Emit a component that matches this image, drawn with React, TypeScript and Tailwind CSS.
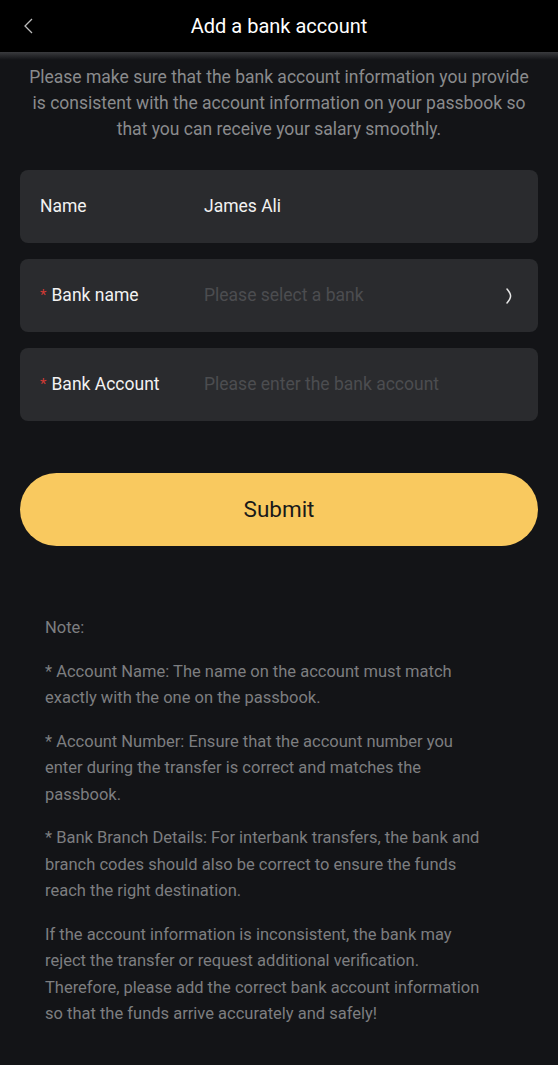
const font = { fontFamily: 'Roboto, "Noto Sans", Arial, sans-serif' };

function Row({
  label,
  required,
  value,
  placeholder,
  arrow,
}: {
  label: string;
  required?: boolean;
  value?: string;
  placeholder?: string;
  arrow?: boolean;
}) {
  return (
    <div className="flex h-[73px] items-center rounded-lg bg-[#2a2b2e] pl-[20px] pr-[25px]">
      <div className="flex w-[164px] items-center text-[17.5px] text-[#f2f2f2]">
        {required && <span className="mr-[5px] text-[15px] text-[#d03a35]">*</span>}
        {label}
      </div>
      <div className="flex-1 text-[17.5px]">
        {value ? (
          <span className="text-[#f2f2f2]">{value}</span>
        ) : (
          <span className="text-[#4c4d50]">{placeholder}</span>
        )}
      </div>
      {arrow && (
        <svg width="8" height="18" viewBox="0 0 8 18" fill="none">
          <path d="M2 2 C5 5.5 5.6 7.5 5.6 9 C5.6 10.5 5 12.5 2 16" stroke="#e6e6e6" strokeWidth="1.5" strokeLinecap="round" />
        </svg>
      )}
    </div>
  );
}

export default function App() {
  return (
    <div className="min-h-[1065px] bg-[#131417]" style={font}>
      {/* Header */}
      <div className="relative flex h-[52px] items-center justify-center bg-black">
        <svg className="absolute left-[22px] top-[17px]" width="12" height="18" viewBox="0 0 12 18" fill="none">
          <path d="M10 2 L3 9 L10 16" stroke="#bdbdbd" strokeWidth="1.3" />
        </svg>
        <h1 className="text-[20px] text-white">Add a bank account</h1>
      </div>
      <div className="h-[8px] bg-gradient-to-b from-[#3a3b3e] to-[#131417]" />

      {/* Intro */}
      <p className="px-[22px] pt-[4px] text-center text-[17.5px] leading-[26px] text-[#8a8b8d]">
        Please make sure that the bank account information you provide is consistent with the account information on your passbook so that you can receive your salary smoothly.
      </p>

      {/* Form */}
      <div className="mt-[28px] flex flex-col gap-[16px] px-[20px]">
        <Row label="Name" value="James Ali" />
        <Row label="Bank name" required placeholder="Please select a bank" arrow />
        <Row label="Bank Account" required placeholder="Please enter the bank account" />
      </div>

      <div className="mt-[52px] px-[20px]">
        <button className="flex h-[73px] w-full items-center justify-center rounded-full bg-[#f9c95f] text-[22.5px] text-[#1a1a1a]">
          Submit
        </button>
      </div>

      {/* Notes */}
      <div className="mt-[69px] flex flex-col gap-[17px] pl-[45px] pr-[69px] text-[16.5px] leading-[26.5px] text-[#7d7e80]">
        <p>Note:</p>
        <p>* Account Name: The name on the account must match exactly with the one on the passbook.</p>
        <p>* Account Number: Ensure that the account number you enter during the transfer is correct and matches the passbook.</p>
        <p>* Bank Branch Details: For interbank transfers, the bank and branch codes should also be correct to ensure the funds reach the right destination.</p>
        <p>If the account information is inconsistent, the bank may reject the transfer or request additional verification. Therefore, please add the correct bank account information so that the funds arrive accurately and safely!</p>
      </div>
    </div>
  );
}
